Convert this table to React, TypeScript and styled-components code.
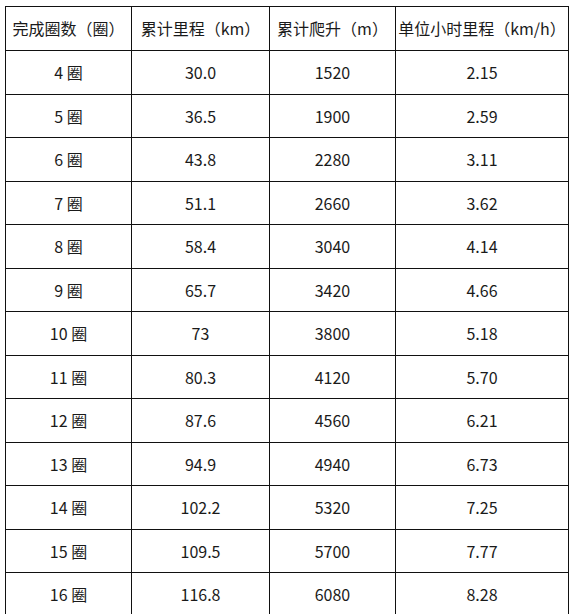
import React from "react";
import styled, { createGlobalStyle } from "styled-components";

const Global = createGlobalStyle`
  html, body { margin: 0; padding: 0; background: #fff; }
  body { width: 576px; height: 614px; overflow: hidden; }
  #root { width: 576px; height: 614px; }
`;

const Page = styled.div`
  width: 576px;
  height: 614px;
  overflow: hidden;
  background: #fff;
  padding: 6px 0 0 5px;
  box-sizing: border-box;
  font-family: "Noto Sans CJK SC", "Noto Sans", sans-serif;
`;

const Table = styled.table`
  border-collapse: collapse;
  table-layout: fixed;
  width: 564px;
  color: #1a1a1a;
  font-size: 16px;
`;

const Col = styled.col<{ $w: number }>`
  width: ${(p) => p.$w}px;
`;

const Row = styled.tr<{ $h: number }>`
  height: ${(p) => p.$h}px;
`;

const HeadCell = styled.th`
  border: 1px solid #111;
  font-weight: 400;
  text-align: center;
  padding: 0 0 1px;
  white-space: nowrap;
`;

const Paren = styled.span`
  display: inline-block;
  margin: 0;
`;

const Cell = styled.td`
  border: 1px solid #111;
  text-align: center;
  padding: 0;
  white-space: nowrap;
`;

const headers: [string, string][] = [
  ["完成圈数", "圈"],
  ["累计里程", "km"],
  ["累计爬升", "m"],
  ["单位小时里程", "km/h"],
];

const rows: [string, string, string, string][] = [
  ["4 圈", "30.0", "1520", "2.15"],
  ["5 圈", "36.5", "1900", "2.59"],
  ["6 圈", "43.8", "2280", "3.11"],
  ["7 圈", "51.1", "2660", "3.62"],
  ["8 圈", "58.4", "3040", "4.14"],
  ["9 圈", "65.7", "3420", "4.66"],
  ["10 圈", "73", "3800", "5.18"],
  ["11 圈", "80.3", "4120", "5.70"],
  ["12 圈", "87.6", "4560", "6.21"],
  ["13 圈", "94.9", "4940", "6.73"],
  ["14 圈", "102.2", "5320", "7.25"],
  ["15 圈", "109.5", "5700", "7.77"],
  ["16 圈", "116.8", "6080", "8.28"],
];

export default function App() {
  return (
    <>
      <Global />
      <Page>
        <Table>
          <colgroup>
            <Col $w={126} />
            <Col $w={138} />
            <Col $w={126} />
            <Col $w={173} />
          </colgroup>
          <thead>
            <Row $h={44}>
              {headers.map(([label, unit]) => (
                <HeadCell key={label}>
                  {label}
                  <Paren>（</Paren>
                  {unit}
                  <Paren>）</Paren>
                </HeadCell>
              ))}
            </Row>
          </thead>
          <tbody>
            {rows.map((r) => (
              <Row $h={43.5} key={r[0]}>
                {r.map((c, i) => (
                  <Cell key={i}>{c}</Cell>
                ))}
              </Row>
            ))}
          </tbody>
        </Table>
      </Page>
    </>
  );
}
